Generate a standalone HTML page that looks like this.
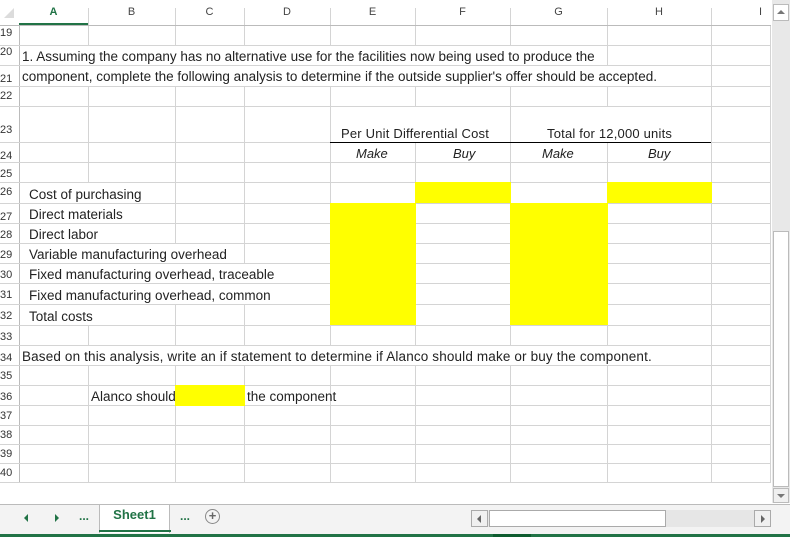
<!DOCTYPE html>
<html><head><meta charset="utf-8"><style>
*{margin:0;padding:0;box-sizing:border-box}
body{width:790px;height:537px;overflow:hidden;background:#fff;font-family:"Liberation Sans",sans-serif;position:relative}
.a{position:absolute}
.v{position:absolute;width:1px;background:#d4d4d4}
.h{position:absolute;height:1px;background:#d4d4d4}
.t{position:absolute;font-size:13.5px;color:#222;white-space:nowrap;line-height:16px}
.rn{position:absolute;left:0;width:18px;font-size:11px;color:#333;line-height:14px;margin-top:3px}
.ch{position:absolute;top:6px;font-size:11px;color:#444;text-align:center}
.y{position:absolute;background:#ffff00}
.w{position:absolute;background:#fff}
</style></head><body>
<div class="a" style="left:19px;top:23px;width:69px;height:2px;background:#217346"></div>
<div class="a" style="left:4px;top:8px;width:0;height:0;border-left:10px solid transparent;border-bottom:10px solid #dcdcdc"></div>
<div class="ch" style="left:19px;width:69px;color:#217346;font-weight:bold">A</div>
<div class="ch" style="left:88px;width:87px">B</div>
<div class="ch" style="left:175px;width:69px">C</div>
<div class="ch" style="left:244px;width:86px">D</div>
<div class="ch" style="left:330px;width:85px">E</div>
<div class="ch" style="left:415px;width:95px">F</div>
<div class="ch" style="left:510px;width:97px">G</div>
<div class="ch" style="left:607px;width:104px">H</div>
<div class="ch" style="left:711px;width:59px;text-align:right;padding-right:8px">I</div>
<div class="v" style="left:88px;top:8px;height:17px"></div>
<div class="v" style="left:175px;top:8px;height:17px"></div>
<div class="v" style="left:244px;top:8px;height:17px"></div>
<div class="v" style="left:330px;top:8px;height:17px"></div>
<div class="v" style="left:415px;top:8px;height:17px"></div>
<div class="v" style="left:510px;top:8px;height:17px"></div>
<div class="v" style="left:607px;top:8px;height:17px"></div>
<div class="v" style="left:711px;top:8px;height:17px"></div>
<div class="v" style="left:19px;top:25px;height:458px;background:#bbb"></div>
<div class="v" style="left:88px;top:25px;height:458px"></div>
<div class="v" style="left:175px;top:25px;height:458px"></div>
<div class="v" style="left:244px;top:25px;height:458px"></div>
<div class="v" style="left:330px;top:25px;height:458px"></div>
<div class="v" style="left:415px;top:25px;height:458px"></div>
<div class="v" style="left:510px;top:25px;height:458px"></div>
<div class="v" style="left:607px;top:25px;height:458px"></div>
<div class="v" style="left:711px;top:25px;height:458px"></div>
<div class="v" style="left:770px;top:25px;height:458px"></div>
<div class="w" style="left:20px;top:46px;width:587px;height:40px"></div>
<div class="w" style="left:607px;top:66px;width:104px;height:20px"></div>
<div class="w" style="left:20px;top:346px;width:691px;height:19px"></div>
<div class="w" style="left:331px;top:107px;width:179px;height:35px"></div>
<div class="w" style="left:511px;top:107px;width:200px;height:35px"></div>
<div class="w" style="left:20px;top:183px;width:155px;height:142px"></div>
<div class="w" style="left:20px;top:244px;width:310px;height:60px"></div>
<div class="v" style="left:244px;top:244px;height:19px"></div>
<div class="w" style="left:245px;top:386px;width:85px;height:19px"></div>
<div class="h" style="left:0;top:25px;width:771px;background:#bbb"></div>
<div class="h" style="left:0;top:45px;width:771px"></div>
<div class="h" style="left:0;top:65px;width:771px"></div>
<div class="h" style="left:0;top:86px;width:771px"></div>
<div class="h" style="left:0;top:106px;width:771px"></div>
<div class="h" style="left:0;top:142px;width:771px"></div>
<div class="h" style="left:0;top:162px;width:771px"></div>
<div class="h" style="left:0;top:182px;width:771px"></div>
<div class="h" style="left:0;top:203px;width:771px"></div>
<div class="h" style="left:0;top:223px;width:771px"></div>
<div class="h" style="left:0;top:243px;width:771px"></div>
<div class="h" style="left:0;top:263px;width:771px"></div>
<div class="h" style="left:0;top:283px;width:771px"></div>
<div class="h" style="left:0;top:304px;width:771px"></div>
<div class="h" style="left:0;top:325px;width:771px"></div>
<div class="h" style="left:0;top:345px;width:771px"></div>
<div class="h" style="left:0;top:365px;width:771px"></div>
<div class="h" style="left:0;top:385px;width:771px"></div>
<div class="h" style="left:0;top:405px;width:771px"></div>
<div class="h" style="left:0;top:425px;width:771px"></div>
<div class="h" style="left:0;top:444px;width:771px"></div>
<div class="h" style="left:0;top:463px;width:771px"></div>
<div class="h" style="left:0;top:482px;width:771px"></div>
<div class="rn" style="top:23px">19</div>
<div class="rn" style="top:42px">20</div>
<div class="rn" style="top:69px">21</div>
<div class="rn" style="top:86px">22</div>
<div class="rn" style="top:120px">23</div>
<div class="rn" style="top:146px">24</div>
<div class="rn" style="top:164px">25</div>
<div class="rn" style="top:182px">26</div>
<div class="rn" style="top:207px">27</div>
<div class="rn" style="top:225px">28</div>
<div class="rn" style="top:245px">29</div>
<div class="rn" style="top:265px">30</div>
<div class="rn" style="top:285px">31</div>
<div class="rn" style="top:306px">32</div>
<div class="rn" style="top:327px">33</div>
<div class="rn" style="top:348px">34</div>
<div class="rn" style="top:366px">35</div>
<div class="rn" style="top:387px">36</div>
<div class="rn" style="top:406px">37</div>
<div class="rn" style="top:425px">38</div>
<div class="rn" style="top:444px">39</div>
<div class="rn" style="top:463px">40</div>
<div class="y" style="left:415px;top:182px;width:96px;height:21px"></div>
<div class="y" style="left:607px;top:182px;width:105px;height:21px"></div>
<div class="y" style="left:330px;top:203px;width:86px;height:122px"></div>
<div class="y" style="left:510px;top:203px;width:98px;height:122px"></div>
<div class="y" style="left:175px;top:385px;width:70px;height:21px"></div>
<div class="a" style="left:330px;top:142px;width:180px;height:1px;background:#000"></div>
<div class="a" style="left:510px;top:142px;width:201px;height:1px;background:#000"></div>
<div class="t" style="left:22px;top:49px">1. Assuming the company has no alternative use for the facilities now being used to produce the</div>
<div class="t" style="left:22px;top:69px">component, complete the following analysis to determine if the outside supplier's offer should be accepted.</div>
<div class="t" style="left:341px;top:126px;font-size:13px;letter-spacing:0.2px">Per Unit Differential Cost</div>
<div class="t" style="left:547px;top:126px;font-size:13px;letter-spacing:0.2px">Total for 12,000 units</div>
<div class="t" style="left:356px;top:146px;font-style:italic;font-size:13px">Make</div>
<div class="t" style="left:453px;top:146px;font-style:italic;font-size:13px">Buy</div>
<div class="t" style="left:542px;top:146px;font-style:italic;font-size:13px">Make</div>
<div class="t" style="left:648px;top:146px;font-style:italic;font-size:13px">Buy</div>
<div class="t" style="left:29px;top:187px">Cost of purchasing</div>
<div class="t" style="left:29px;top:207px">Direct materials</div>
<div class="t" style="left:29px;top:227px">Direct labor</div>
<div class="t" style="left:29px;top:247px">Variable manufacturing overhead</div>
<div class="t" style="left:29px;top:267px">Fixed manufacturing overhead, traceable</div>
<div class="t" style="left:29px;top:288px">Fixed manufacturing overhead, common</div>
<div class="t" style="left:29px;top:309px">Total costs</div>
<div class="t" style="left:22px;top:349px;letter-spacing:0.15px">Based on this analysis, write an if statement to determine if Alanco should make or buy the component.</div>
<div class="t" style="left:91px;top:389px">Alanco should</div>
<div class="t" style="left:247px;top:389px">the component</div>
<div class="a" style="left:772px;top:0;width:18px;height:503px;background:#e8e8e8"></div>
<div class="a" style="left:773px;top:4px;width:16px;height:17px;background:#fff;border:1px solid #bbb"></div>
<div class="a" style="left:777px;top:10px;width:0;height:0;border-left:4px solid transparent;border-right:4px solid transparent;border-bottom:4px solid #777"></div>
<div class="a" style="left:773px;top:231px;width:16px;height:256px;background:#fff;border:1px solid #bbb"></div>
<div class="a" style="left:773px;top:488px;width:16px;height:15px;background:#f0f0f0;border:1px solid #bbb"></div>
<div class="a" style="left:777px;top:494px;width:0;height:0;border-left:4px solid transparent;border-right:4px solid transparent;border-top:4px solid #777"></div>
<div class="a" style="left:0;top:504px;width:790px;height:30px;background:#f3f3f3;border-top:1px solid #bbb"></div>
<div class="a" style="left:99px;top:504px;width:71px;height:29px;background:#fff;border:1px solid #bbb;border-bottom:none"></div>
<div class="a" style="left:99px;top:530px;width:72px;height:2px;background:#217346"></div>
<div class="a" style="left:99px;top:507px;width:71px;text-align:center;font-size:13px;font-weight:bold;color:#217346">Sheet1</div>
<div class="a" style="left:24px;top:514px;width:0;height:0;border-top:4px solid transparent;border-bottom:4px solid transparent;border-right:4px solid #217346"></div>
<div class="a" style="left:55px;top:514px;width:0;height:0;border-top:4px solid transparent;border-bottom:4px solid transparent;border-left:4px solid #217346"></div>
<div class="a" style="left:79px;top:509px;font-size:12px;font-weight:bold;color:#217346">...</div>
<div class="a" style="left:180px;top:509px;font-size:12px;font-weight:bold;color:#217346">...</div>
<div class="a" style="left:205px;top:509px;width:15px;height:15px;border:1px solid #888;border-radius:50%;text-align:center;font-size:13px;line-height:12px;color:#666;font-weight:bold">+</div>
<div class="a" style="left:471px;top:510px;width:300px;height:17px;background:#e6e6e6"></div>
<div class="a" style="left:471px;top:510px;width:17px;height:17px;background:#f0f0f0;border:1px solid #aaa"></div>
<div class="a" style="left:477px;top:515px;width:0;height:0;border-top:4px solid transparent;border-bottom:4px solid transparent;border-right:4px solid #666"></div>
<div class="a" style="left:489px;top:510px;width:177px;height:17px;background:#fff;border:1px solid #aaa"></div>
<div class="a" style="left:754px;top:510px;width:17px;height:17px;background:#f0f0f0;border:1px solid #aaa"></div>
<div class="a" style="left:761px;top:515px;width:0;height:0;border-top:4px solid transparent;border-bottom:4px solid transparent;border-left:4px solid #666"></div>
<div class="a" style="left:0;top:534px;width:790px;height:3px;background:#217346"></div>
<div class="a" style="left:493px;top:534px;width:38px;height:3px;background:#0e5c2f"></div>
</body></html>
